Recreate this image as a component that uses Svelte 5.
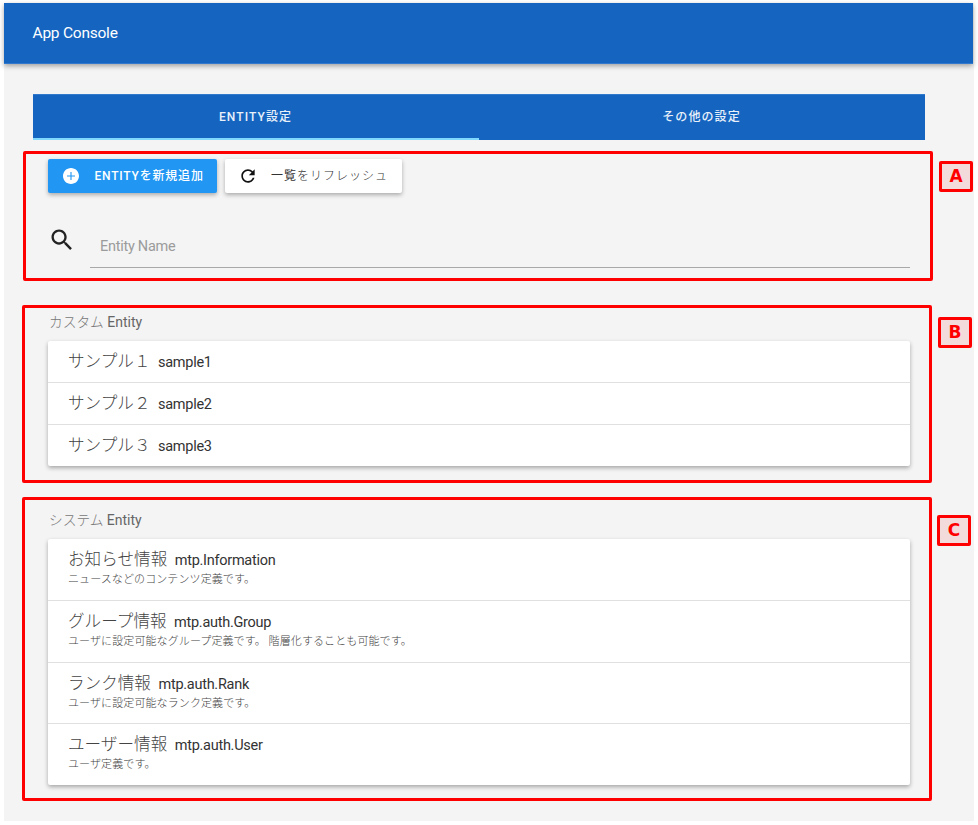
<script>
  const custom = [
    { label: 'サンプル１', name: 'sample1' },
    { label: 'サンプル２', name: 'sample2' },
    { label: 'サンプル３', name: 'sample3' }
  ];
  const system = [
    { label: 'お知らせ情報', name: 'mtp.Information', note: 'ニュースなどのコンテンツ定義です。' },
    { label: 'グループ情報', name: 'mtp.auth.Group', note: 'ユーザに設定可能なグループ定義です。 階層化することも可能です。' },
    { label: 'ランク情報', name: 'mtp.auth.Rank', note: 'ユーザに設定可能なランク定義です。' },
    { label: 'ユーザー情報', name: 'mtp.auth.User', note: 'ユーザ定義です。' }
  ];
</script>

<div class="page">
  <header>App Console</header>
  <main>
    <nav>
      <div class="tab active"><span>ENTITY設定</span></div>
      <div class="tab"><span>その他の設定</span></div>
    </nav>

    <div class="content">
      <div class="actions">
        <button class="btn primary">
          <svg width="16" height="16" viewBox="2 2 20 20"><path fill="#fff" d="M12 2C6.48 2 2 6.48 2 12s4.480 10 10 10 10-4.480 10-10S17.520 2 12 2zm5 10.700h-4.300V17h-1.400v-4.300H7v-1.400h4.300V7h1.400v4.300H17v1.400z" /></svg>
          <span>ENTITYを新規追加</span>
        </button>
        <button class="btn plain">
          <svg width="20" height="20" viewBox="0 0 24 24"><path fill="#111" d="M17.650 6.350C16.200 4.900 14.210 4 12 4c-4.420 0-7.990 3.580-7.990 8s3.570 8 7.990 8c3.730 0 6.840-2.550 7.730-6h-2.080c-.820 2.330-3.040 4-5.650 4-3.310 0-6-2.690-6-6s2.690-6 6-6c1.660 0 3.140.690 4.220 1.780L13 11h7V4l-2.350 2.350z" /></svg>
          <span><b>一覧</b>をリフレッシュ</span>
        </button>
      </div>

      <div class="search">
        <svg width="28" height="28" viewBox="0 0 24 24"><path fill="#222" d="M15.500 14h-.790l-.280-.270C15.410 12.590 16 11.110 16 9.500 16 5.910 13.090 3 9.500 3S3 5.910 3 9.500 5.910 16 9.500 16c1.610 0 3.090-.590 4.230-1.570l.270.280v.790l5 4.990L20.490 19l-4.990-5zm-6 0C7.010 14 5 11.990 5 9.500S7.010 5 9.500 5 14 7.010 14 9.500 11.990 14 9.500 14z" /></svg>
        <input type="text" placeholder="Entity Name" />
      </div>

      <section class="first">
        <h2><span>カスタム</span> Entity</h2>
        <ul class="card">
          {#each custom as e}
            <li><div class="title"><span class="label">{e.label}</span><span class="name">{e.name}</span></div></li>
          {/each}
        </ul>
      </section>

      <section class="second">
        <h2><span>システム</span> Entity</h2>
        <ul class="card tall">
          {#each system as e}
            <li>
              <div class="title"><span class="label">{e.label}</span><span class="name">{e.name}</span></div>
              <p>{e.note}</p>
            </li>
          {/each}
        </ul>
      </section>
    </div>
  </main>
</div>

<div class="frame fa"></div>
<div class="frame fb"></div>
<div class="frame fc"></div>
<div class="mark ma">A</div>
<div class="mark mb">B</div>
<div class="mark mc">C</div>

<style>
  :global(body) { background: #fff; }
  :global(#app) { position: relative; height: 825px; overflow: hidden; }
  * { box-sizing: border-box; }
  .page {
    margin: 0 4px;
    border-top: 3px solid #fff;
    width: 970px;
    height: 821px;
    background: #f4f4f4;
    font-family: Roboto, "Noto Sans CJK JP", sans-serif;
  }
  header {
    width: 969px;
    height: 61px;
    padding-left: 28.500px;
    line-height: 60px;
    font-size: 15.500px;
    letter-spacing: -0.230px;
    color: #fff;
    background: #1565c0;
    border-bottom: 1px solid #3079cc;
    box-shadow: 0 2px 5px rgba(0, 0, 0, .35);
  }
  main { padding: 30px 48px 0 29px; width: 969px; }
  nav { display: flex; height: 46px; width: 892px; background: #1565c0; border-top: 1px solid #3079cc; }
  .tab {
    flex: 1;
    text-align: center;
    line-height: 44px;
    font-size: 12px;
    font-weight: 500;
    letter-spacing: 1.100px;
    color: #e8f0fa;
  }
  .tab span { margin-right: 1px; }
  .active { border-bottom: 2px solid #80d8ff; }
  .content { padding-left: 15px; }
  .actions { display: flex; gap: 8px; padding-top: 19px; }
  .btn {
    display: flex;
    align-items: center;
    height: 34px;
    border: 0;
    border-radius: 2px;
    padding: 0;
    font: 500 12px Roboto, "Noto Sans CJK JP", sans-serif;
    white-space: nowrap;
    box-shadow: 0 2px 4px rgba(0, 0, 0, .3);
  }
  .btn span { padding-bottom: 3px; }
  .primary { width: 169px; padding-left: 15px; background: #2196f3; color: #fff; }
  .primary span { margin-left: 15.500px; letter-spacing: .8px; }
  .plain { width: 177px; padding-left: 13px; background: #fff; color: #333; font-weight: 300; }
  .plain span { margin-left: 13px; letter-spacing: 1px; }
  .plain b { font-weight: 400; }
  .search { display: flex; margin-top: 32px; }
  .search svg { flex: none; margin-top: 1px; }
  input {
    width: 820px;
    height: 43px;
    margin-left: 14px;
    padding: 0 0 0 10px;
    border: 0;
    border-bottom: 1px solid #a8a8a8;
    outline: 0;
    background: none;
    font: 14.500px Roboto, sans-serif;
    letter-spacing: -.27px;
  }
  input::placeholder { color: #9b9b9b; opacity: 1; }
  h2 { margin: 0; padding-left: 1px; height: 20px; line-height: 20px; font-size: 14px; font-weight: 400; color: #666; }
  h2 span { font-size: 13.700px; font-weight: 300; color: #777; }
  .first { margin-top: 44px; }
  .second { margin-top: 44px; }
  .card {
    width: 862px;
    height: 125px;
    margin: 9px 0 0;
    padding: 0;
    list-style: none;
    display: flex;
    flex-direction: column;
    background: #fff;
    border-radius: 2px;
    box-shadow: 0 2px 4px rgba(0, 0, 0, .32);
  }
  .card.tall { height: 246px; }
  li { flex: 1; padding-left: 20px; border-bottom: 1px solid #e0e0e0; }
  li:last-child { border-bottom: 0; }
  .title { display: flex; align-items: baseline; height: 41px; line-height: 41px; white-space: nowrap; }
  .tall .title { height: 31px; }
  .label { font-size: 16.600px; font-weight: 300; color: #444; }
  .name { margin-left: 7.500px; font-size: 14.500px; letter-spacing: -.27px; color: #333; }
  p { margin: 0; font-size: 11px; letter-spacing: .1px; font-weight: 300; line-height: 19px; color: #444; white-space: nowrap; }
  .frame { position: absolute; width: 910px; border: 3px solid #f00; border-radius: 2px; pointer-events: none; }
  .fa { left: 23px; top: 151px; height: 130px; }
  .fb { left: 22px; top: 305px; height: 178px; }
  .fc { left: 22px; top: 497px; height: 304px; }
  .mark {
    position: absolute;
    width: 34px;
    height: 31px;
    border: 3px solid #f00;
    border-radius: 2px;
    background: #f3dbdb;
    color: #f00;
    text-align: center;
    font: bold 17px/24px "DejaVu Sans", sans-serif;
  }
  .ma { left: 939px; top: 161px; }
  .mb { left: 938px; top: 317px; }
  .mc { left: 937px; top: 515px; }
</style>
